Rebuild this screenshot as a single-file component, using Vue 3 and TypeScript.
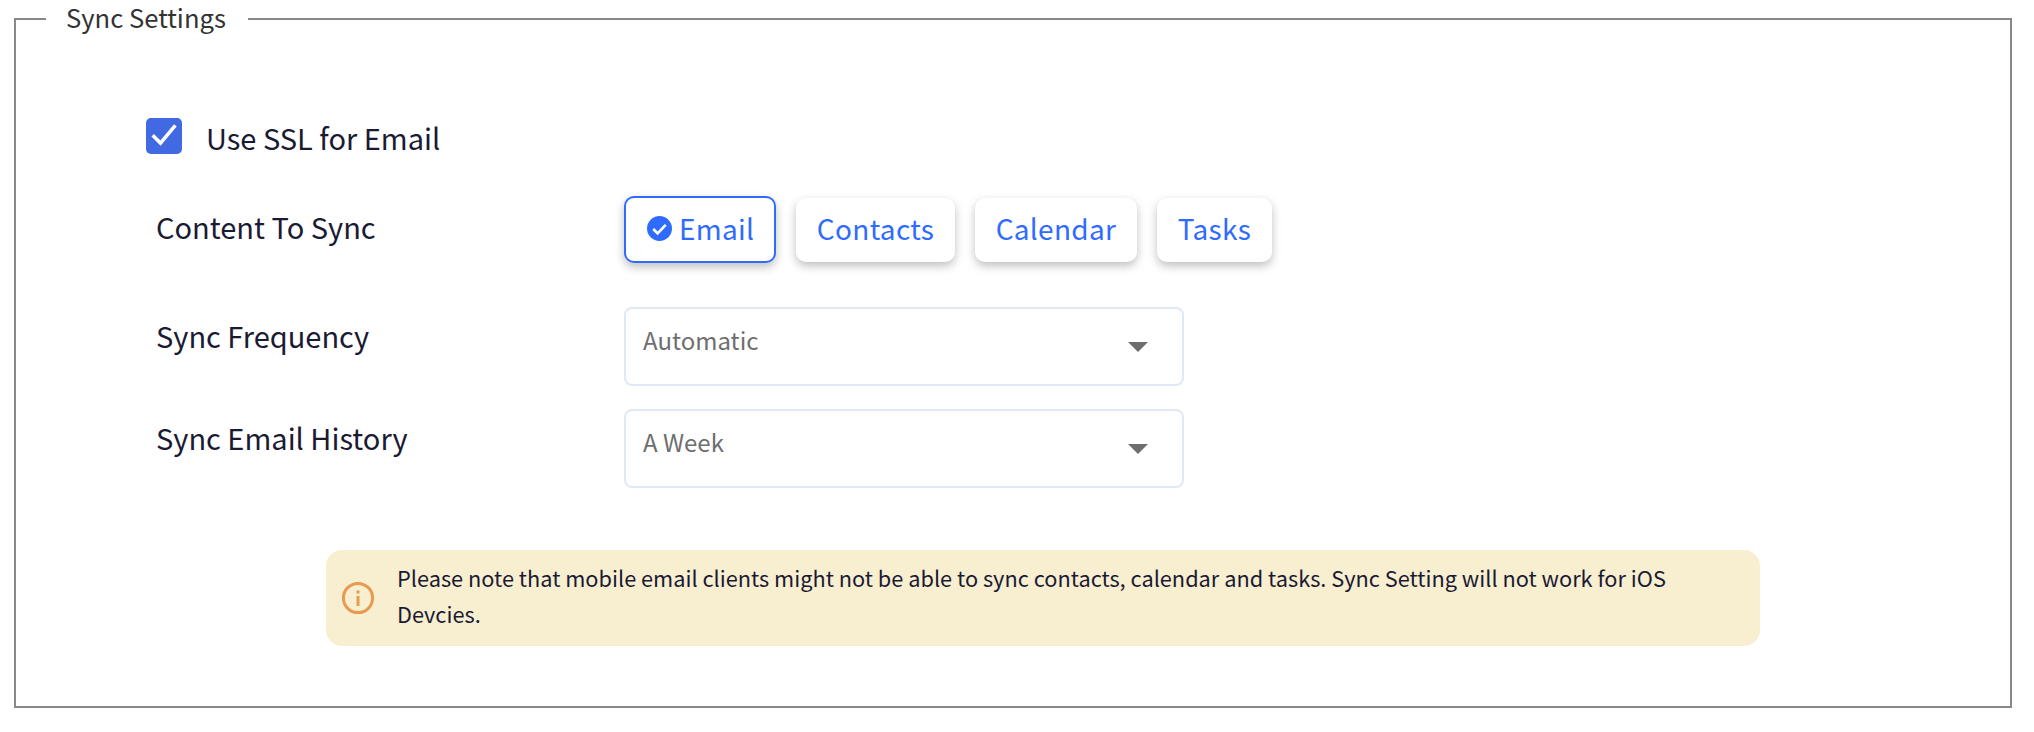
<template>
  <div class="page">
    <fieldset class="sync-box">
      <legend class="sync-legend">Sync Settings</legend>

      <div class="sync-body">
        <label class="ssl-row">
          <span class="check">
            <svg viewBox="0 0 24 24" width="34" height="34">
              <path d="M4 11.5l5.5 5.5L20 4.5" fill="none" stroke="#fff" stroke-width="2.5" />
            </svg>
          </span>
          <span class="ssl-text">Use SSL for Email</span>
        </label>

        <div class="row row-content">
          <div class="row-label content-label">Content To Sync</div>
          <div class="chips">
            <button
              v-for="chip in chips"
              :key="chip"
              class="chip"
              :class="{ active: chip === selected }"
            >
              <svg v-if="chip === selected" class="chip-tick" viewBox="0 0 24 24" width="25" height="25">
                <circle cx="12" cy="12" r="12" fill="#2f6bff" />
                <path d="M6 12.5l4.2 4.2L18 8.5" fill="none" stroke="#fff" stroke-width="2.6" />
              </svg>
              {{ chip }}
            </button>
          </div>
        </div>

        <div v-for="item in selects" :key="item.label" class="row row-select">
          <div class="row-label select-label">{{ item.label }}</div>
          <div class="select">
            <span class="select-value">{{ item.value }}</span>
            <span class="caret"></span>
          </div>
        </div>

        <div class="notice">
          <svg class="notice-icon" viewBox="0 0 34 34" width="34" height="34">
            <circle cx="17" cy="17" r="14.6" fill="none" stroke="#e89a4f" stroke-width="3" />
            <rect x="15.5" y="15" width="3" height="10" fill="#e89a4f" />
            <rect x="15.5" y="9.5" width="3" height="3" fill="#e89a4f" />
          </svg>
          <p class="notice-text">
            Please note that mobile email clients might not be able to sync contacts, calendar and tasks. Sync Setting will not work for iOS Devcies.
          </p>
        </div>
      </div>
    </fieldset>
  </div>
</template>

<script setup lang="ts">
const chips: string[] = ['Email', 'Contacts', 'Calendar', 'Tasks']
const selected = 'Email'

const selects: Array<{ label: string; value: string }> = [
  { label: 'Sync Frequency', value: 'Automatic' },
  { label: 'Sync Email History', value: 'A Week' }
]
</script>

<style>
body {
  background: #fff;
}
</style>

<style scoped>
.page {
  width: 2034px;
  height: 732px;
  padding: 1px 22px 24px 14px;
  box-sizing: border-box;
  font-family: "Noto Sans CJK SC", "Noto Sans", sans-serif;
  color: #1a1a33;
}

.sync-box {
  margin: 0;
  height: 707px;
  box-sizing: border-box;
  border: 2px solid #888;
  padding: 0;
}

.sync-legend {
  margin-left: 30px;
  padding: 0 22px 4px 20px;
  font-size: 25.6px;
  line-height: 32px;
  color: #333;
}

.sync-body {
  padding-left: 130px;
}

.ssl-row {
  display: flex;
  align-items: flex-start;
  padding-top: 81px;
  height: 36px;
}

.check {
  width: 36px;
  height: 36px;
  border-radius: 5px;
  background: #4169e1;
  display: flex;
  align-items: center;
  justify-content: center;
}

.ssl-text {
  margin-left: 24px;
  padding-top: 1px;
  font-size: 29px;
  line-height: 36px;
}

.row {
  display: flex;
  padding-left: 10px;
}

.row-content {
  margin-top: 42px;
  align-items: center;
}

.row-label {
  width: 468px;
  font-size: 29px;
}

.content-label {
  padding-bottom: 8px;
}

.chips {
  display: flex;
  align-items: center;
  gap: 19.5px;
}

.chip {
  height: 64px;
  padding: 0 19px 3px;
  border: 2px solid #fff;
  border-radius: 10px;
  background: #fff;
  box-shadow: 0 4px 10px rgba(0, 0, 0, 0.25);
  font-family: inherit;
  font-size: 28px;
  letter-spacing: 0.3px;
  color: #2f6bff;
  display: flex;
  align-items: center;
  gap: 7px;
}

.chip.active {
  height: 67px;
  padding-left: 21px;
  padding-right: 20px;
  border-color: #2f6bff;
}

.row-select {
  margin-top: 23px;
}

.row-content + .row-select {
  margin-top: 44px;
}

.select-label {
  padding-top: 7px;
}

.select {
  width: 560px;
  height: 79px;
  box-sizing: border-box;
  border: 2px solid #e1e8f8;
  border-radius: 8px;
  padding: 13px 34px 0 17px;
  display: flex;
  justify-content: space-between;
  font-size: 24px;
  color: #6e6e6e;
}

.caret {
  margin-top: 20px;
  width: 0;
  height: 0;
  border-left: 10px solid transparent;
  border-right: 10px solid transparent;
  border-top: 10px solid #6e6e6e;
}

.notice {
  margin: 62px 0 0 180px;
  width: 1434px;
  height: 96px;
  box-sizing: border-box;
  padding: 0 60px 0 15px;
  border-radius: 16px;
  background: #f8eed0;
  display: flex;
  align-items: center;
  gap: 22px;
}

.notice-icon {
  flex: none;
}

.notice-text {
  margin: 0 0 4px;
  font-size: 21.75px;
  line-height: 36px;
}
</style>
